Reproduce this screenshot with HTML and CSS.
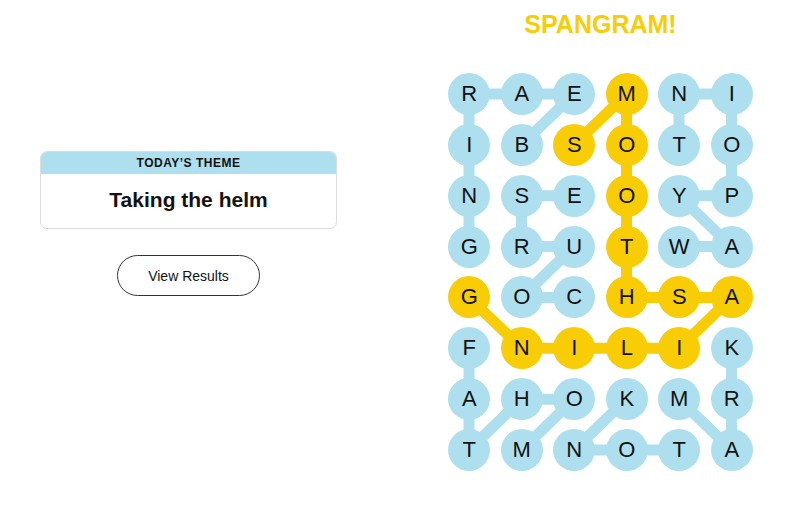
FILE: index.html
```html
<!DOCTYPE html>
<html lang="en">
<head>
<meta charset="utf-8">
<title>Strands</title>
<link rel="stylesheet" href="styles.css">
</head>
<body>
<main class="page">
  <section class="left">
    <div class="theme-card">
      <div class="theme-head">TODAY’S THEME</div>
      <div class="theme-body">Taking the helm</div>
    </div>
    <button class="results-btn">View Results</button>
  </section>
  <section class="right">
    <h1 class="hint">SPANGRAM!</h1>
    <div class="board">
      <svg class="links" width="305" height="399" viewBox="0 0 305 399" aria-hidden="true">
        <g fill="none" stroke="#aedfee" stroke-width="11" stroke-linecap="round" stroke-linejoin="round">
          <polyline points="73.5,71.86 126,21 21,21 21,173.58"/>
          <polyline points="283.5,122.72 283.5,21 231,21 231,71.86"/>
          <polyline points="283.5,122.72 231,122.72 283.5,173.58 231,173.58"/>
          <polyline points="126,122.72 73.5,122.72 73.5,173.58 126,173.58 73.5,224.44 126,224.44"/>
          <polyline points="21,275.3 21,377.02 73.5,326.16 126,326.16 73.5,377.02"/>
          <polyline points="178.5,326.16 126,377.02 231,377.02"/>
          <polyline points="231,326.16 283.5,377.02 283.5,275.3"/>
        </g>
        <polyline fill="none" stroke="#f8cd05" stroke-width="11" stroke-linecap="round" stroke-linejoin="round" points="126,71.86 178.5,21 178.5,224.44 283.5,224.44 231,275.3 73.5,275.3 21,224.44"/>
      </svg>
      <span class="cell">R</span><span class="cell">A</span><span class="cell">E</span><span class="cell gold">M</span><span class="cell">N</span><span class="cell">I</span>
      <span class="cell">I</span><span class="cell">B</span><span class="cell gold">S</span><span class="cell gold">O</span><span class="cell">T</span><span class="cell">O</span>
      <span class="cell">N</span><span class="cell">S</span><span class="cell">E</span><span class="cell gold">O</span><span class="cell">Y</span><span class="cell">P</span>
      <span class="cell">G</span><span class="cell">R</span><span class="cell">U</span><span class="cell gold">T</span><span class="cell">W</span><span class="cell">A</span>
      <span class="cell gold">G</span><span class="cell">O</span><span class="cell">C</span><span class="cell gold">H</span><span class="cell gold">S</span><span class="cell gold">A</span>
      <span class="cell">F</span><span class="cell gold">N</span><span class="cell gold">I</span><span class="cell gold">L</span><span class="cell gold">I</span><span class="cell">K</span>
      <span class="cell">A</span><span class="cell">H</span><span class="cell">O</span><span class="cell">K</span><span class="cell">M</span><span class="cell">R</span>
      <span class="cell">T</span><span class="cell">M</span><span class="cell">N</span><span class="cell">O</span><span class="cell">T</span><span class="cell">A</span>
    </div>
  </section>
</main>
</body>
</html>
```

FILE: styles.css
```css
* { box-sizing: border-box; }

html, body {
  margin: 0;
  padding: 0;
  background: #ffffff;
}

body {
  font-family: "Liberation Sans", Arial, sans-serif;
  color: #121212;
  width: 800px;
  height: 511px;
  overflow: hidden;
}

.page {
  display: flex;
  align-items: flex-start;
  padding-left: 40px;
}

.left {
  width: 297px;
  margin-top: 151px;
  display: flex;
  flex-direction: column;
  align-items: center;
}

.theme-card {
  width: 297px;
  border: 1px solid #dcdcdc;
  border-radius: 7px;
  overflow: hidden;
  background: #fff;
}

.theme-head {
  background: #aedfee;
  height: 22px;
  line-height: 22px;
  text-align: center;
  font-size: 12px;
  font-weight: 700;
  letter-spacing: 0.5px;
  color: #121212;
}

.theme-body {
  height: 54px;
  display: flex;
  align-items: center;
  justify-content: center;
  font-size: 21px;
  font-weight: 700;
  color: #121212;
  padding-bottom: 2px;
}

.results-btn {
  margin-top: 26px;
  width: 143px;
  height: 41px;
  border: 1px solid #333;
  border-radius: 999px;
  background: #fff;
  font-family: "Liberation Sans", Arial, sans-serif;
  font-size: 14px;
  color: #121212;
  padding: 0;
}

.right {
  margin-left: 111px;
  width: 305px;
  display: flex;
  flex-direction: column;
  align-items: center;
}

.hint {
  margin: 9px 0 0;
  height: 30px;
  line-height: 30px;
  font-size: 25px;
  font-weight: 700;
  color: #f8cd05;
}

.board {
  position: relative;
  margin-top: 34px;
  display: grid;
  grid-template-columns: repeat(6, 42px);
  grid-auto-rows: 42px;
  column-gap: 10.5px;
  row-gap: 8.86px;
}

.links {
  position: absolute;
  left: 0;
  top: 0;
  z-index: 0;
}

.cell {
  position: relative;
  z-index: 1;
  width: 42px;
  height: 42px;
  border-radius: 50%;
  background: #aedfee;
  display: flex;
  align-items: center;
  justify-content: center;
  font-size: 22px;
  color: #121212;
}

.cell.gold {
  background: #f8cd05;
}
```
